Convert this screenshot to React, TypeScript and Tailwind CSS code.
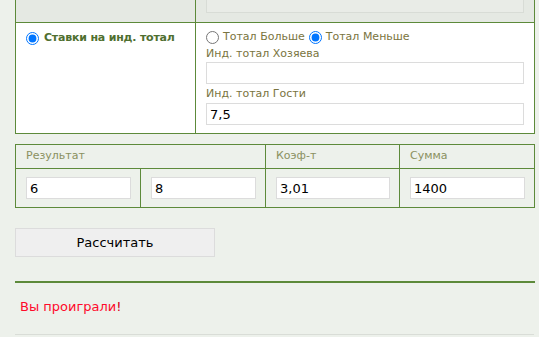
import { useState } from 'react';

const font = { fontFamily: '"DejaVu Sans", Verdana, sans-serif' };

const Field = ({ value, className = '' }: { value: string; className?: string }) => (
  <input
    readOnly
    value={value}
    className={`h-[22px] border border-[#dcdcdc] bg-white px-[3px] text-[13px] text-black outline-none ${className}`}
    style={font}
  />
);

export default function App() {
  const [total, setTotal] = useState<'more' | 'less'>('less');

  return (
    <div className="h-[337px] w-[539px] overflow-hidden bg-[#edf1eb]" style={font}>
      <div className="ml-[15px] w-[520px]">
        {/* stake table */}
        <div className="border-x border-b border-[#5d8a3a]">
          <div className="grid h-[23px] grid-cols-[179px_1fr] border-b border-[#5d8a3a] bg-[#e5e9e3]">
            <div />
            <div className="border-l border-[#5d8a3a] px-[10px]">
              <div className="h-[13px] border-x border-b border-[#d8dcd6] bg-[#e9ece7]" />
            </div>
          </div>
          <div className="grid h-[110px] grid-cols-[179px_1fr] bg-white">
            <label className="flex h-[24px] items-center gap-[5px] self-start pl-[10px] pt-[6px]">
              <input type="radio" defaultChecked className="m-0 h-[13px] w-[13px]" />
              <span className="text-[11px] font-bold tracking-[-0.2px] text-[#4f6f2f]">Ставки на инд. тотал</span>
            </label>
            <div className="flex flex-col border-l border-[#5d8a3a] px-[10px] pt-[6px] text-[11px] text-[#7a7440]">
              <div className="flex h-[16px] items-center">
                <input
                  type="radio"
                  name="total"
                  checked={total === 'more'}
                  onChange={() => setTotal('more')}
                  className="m-0 h-[13px] w-[13px]"
                />
                <span className="ml-[4px]">Тотал Больше</span>
                <input
                  type="radio"
                  name="total"
                  checked={total === 'less'}
                  onChange={() => setTotal('less')}
                  className="m-0 ml-[4px] h-[13px] w-[13px]"
                />
                <span className="ml-[4px]">Тотал Меньше</span>
              </div>
              <div className="flex h-[17px] items-center pt-[2px]">Инд. тотал Хозяева</div>
              <Field value="" className="w-full" />
              <div className="flex h-[19px] items-center pt-[2px]">Инд. тотал Гости</div>
              <Field value="7,5" className="w-full" />
            </div>
          </div>
        </div>

        {/* result table */}
        <div className="mt-[10px] border border-[#5d8a3a] text-[11px] text-[#8a9060]">
          <div className="grid h-[24px] grid-cols-[249px_134px_1fr] border-b border-[#5d8a3a]">
            <div className="flex items-center pl-[10px]">Результат</div>
            <div className="flex items-center border-l border-[#5d8a3a] pl-[10px]">Коэф-т</div>
            <div className="flex items-center border-l border-[#5d8a3a] pl-[10px]">Сумма</div>
          </div>
          <div className="grid h-[38px] grid-cols-[124px_125px_134px_1fr]">
            <div className="flex items-center pl-[10px] pr-[9px]">
              <Field value="6" className="w-full" />
            </div>
            <div className="flex items-center border-l border-[#5d8a3a] pl-[10px] pr-[9px]">
              <Field value="8" className="w-full" />
            </div>
            <div className="flex items-center border-l border-[#5d8a3a] pl-[10px] pr-[9px]">
              <Field value="3,01" className="w-full" />
            </div>
            <div className="flex items-center border-l border-[#5d8a3a] pl-[10px] pr-[9px]">
              <Field value="1400" className="w-full" />
            </div>
          </div>
        </div>

        <button
          className="mt-[20px] h-[29px] w-[200px] border border-[#dcdcdc] bg-[#efefef] text-[13px] text-black"
          style={font}
        >
          Рассчитать
        </button>

        <div className="mt-[24px] h-[2px] w-[520px] bg-[#5d8a3a]" />
        <div className="pl-[5px] pt-[16px] text-[13px] leading-[16px]">
          <span className="text-[#ff0a2a]">Вы проиграли</span>
          <span className="text-[#d0001a]">!</span>
        </div>
        <div className="mt-[19px] h-px w-[519px] bg-[#d9ddd7]" />
      </div>
    </div>
  );
}
